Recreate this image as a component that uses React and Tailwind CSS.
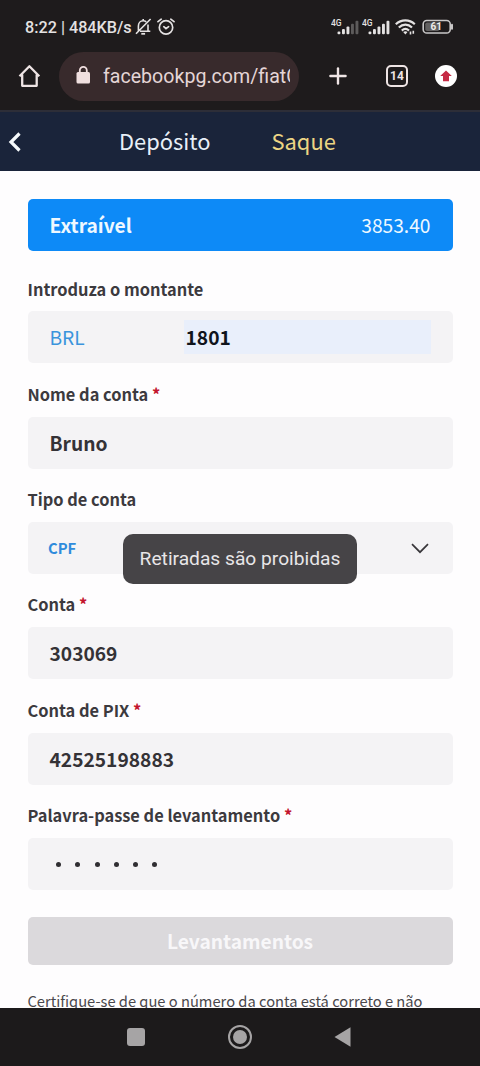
import { Plus } from 'lucide-react'

const FIELDS = [
  { label: 'Nome da conta', value: 'Bruno', required: true },
  { label: 'Tipo de conta', value: 'CPF', type: 'select' },
  { label: 'Conta', value: '303069', required: true },
  { label: 'Conta de PIX', value: '42525198883', required: true },
  { label: 'Palavra-passe de levantamento', length: 6, type: 'password', required: true },
]

function Signal({ weak }) {
  return (
    <svg className="w-[30.5px] h-[18px]" viewBox="0 0 30.5 18" fill="#e4e2e2">
      <text x="0" y="8.2" fontSize="8.5" fontWeight="500" className="font-['Roboto',sans-serif]">4G</text>
      <rect x="6.5" y="13.4" width="2.9" height="2.8" rx="1" />
      <rect x="11" y="11" width="2.9" height="5.2" rx="1" />
      <rect x="15.5" y="8.5" width="2.9" height="7.7" rx="1" />
      <rect x="20" y="5.7" width="2.9" height="10.5" rx="1" fill={weak ? '#5d5b5b' : '#e4e2e2'} />
      <rect x="24.5" y="2.7" width="2.9" height="13.5" rx="1" fill={weak ? '#5d5b5b' : '#e4e2e2'} />
    </svg>
  )
}

function StatusBar() {
  return (
    <div className="h-[53px] pt-px pl-[25px] pr-[26px] flex items-center text-[#e4e2e2]">
      <span className="w-[107px] pt-[2px] text-[16.2px] font-medium whitespace-nowrap">8:22 | 484KB/s</span>
      <svg className="ml-[3px] w-[17px] h-[18px]" viewBox="0 0 17 18" fill="none" stroke="currentColor" strokeWidth="1.6">
        <path d="M3.4 12.8V8c0-3 2-5.2 4.8-5.2 1.2 0 2.2.4 3 1M13 6.5v6.3M5 13.2h10.3M8.2 1v2M15.6 1 1 15.8" />
        <path d="M6.3 15.8h3.8" strokeWidth="1.8" />
      </svg>
      <svg className="ml-[5px] w-[18px] h-[18px]" viewBox="0 0 18 18" fill="none" stroke="currentColor" strokeWidth="1.7" strokeLinecap="round">
        <circle cx="9" cy="9.4" r="6.7" />
        <path d="M1 3.7 4.2 1.2M17 3.7l-3.2-2.5M6.8 8.7l2.2 2 2.6-2" />
      </svg>
      <div className="ml-auto flex items-center">
        <Signal weak />
        <Signal />
        <svg className="ml-[3px] w-[21px] h-[18px]" viewBox="0 0 21 18" fill="none" stroke="currentColor" strokeWidth="2.2">
          <path d="M.8 6.3c5.5-5.2 13.6-5.2 19 0M3.8 9.5c4-3.8 9.3-3.8 13.2 0M6.8 12.6c2.2-2 5-2 7.2 0" />
          <path d="m8.2 13.9 2.2 2.5 2.1-2.5c-1.2-1-3-1-4.3 0Z" fill="currentColor" stroke="none" />
          <path d="M15.5 13.5v3M18.3 12.8v3" strokeWidth="1.6" />
        </svg>
        <svg className="ml-[6px] w-[32px] h-[18px]" viewBox="0 0 32 18" fill="none">
          <rect x="1.2" y="2.5" width="27" height="12.5" rx="3.6" stroke="#c9c7c7" strokeWidth="1.6" />
          <rect x="3.3" y="4.5" width="14" height="8.5" rx="1.8" fill="#626060" />
          <path d="M30 6.7v4" stroke="#c9c7c7" strokeWidth="2" strokeLinecap="round" />
          <text x="14.2" y="12.4" textAnchor="middle" fontSize="10" fontWeight="700" fill="#eeecec" className="font-['Roboto',sans-serif]">61</text>
        </svg>
      </div>
    </div>
  )
}

function BrowserBar() {
  return (
    <div className="h-[57px] pb-[11px] pl-[18px] pr-[23px] flex items-center">
      <svg className="w-[23px] h-[24px] shrink-0" viewBox="0 0 23 24" fill="none" stroke="#eee4e4" strokeWidth="2.3" strokeLinejoin="round">
        <path d="M1.5 12.2 11.4 2.3l9.9 9.9M4.2 10.5v11.3h14.5V10.5" />
      </svg>
      <div className="ml-[18px] w-[240px] h-[49px] shrink-0 rounded-full bg-[#382a2c] pl-[17px] pr-[9px] flex items-center">
        <svg className="w-[15px] h-[18px] shrink-0 -mt-[2px]" viewBox="0 0 15 18" fill="#f0dfdf">
          <rect x=".5" y="6" width="13.5" height="11.5" rx="1.5" />
          <path d="M3.8 7V4.4a3.5 3.5 0 0 1 7 0V7" fill="none" stroke="#f0dfdf" strokeWidth="1.8" />
        </svg>
        <span className="ml-[12px] pt-[2px] w-[187px] overflow-hidden whitespace-nowrap text-[19.6px] leading-[30px] text-[#e4d5d6]">
          facebookpg.com/fiatO
        </span>
      </div>
      <Plus className="ml-[26px] w-[26px] h-[26px] shrink-0 text-[#f0e6e6]" strokeWidth={2.2} />
      <div className="ml-[35px] w-[22px] h-[22px] shrink-0 rounded-[5px] border-2 border-[#eee4e4] text-[#eee4e4] text-[12px] leading-none font-bold flex items-center justify-center">
        14
      </div>
      <div className="ml-[27px] w-[22px] h-[22px] shrink-0 rounded-full bg-white flex items-center justify-center">
        <svg className="w-[14px] h-[14px]" viewBox="0 0 14 14" fill="#c62a45">
          <path d="M7 1.5 12.8 7H10v5.2H4V7H1.2Z" />
        </svg>
      </div>
    </div>
  )
}

function Field({ label, value, type, required, length }) {
  return (
    <div className="h-[105.3px]">
      <div className="h-[53.5px] pt-[17.5px] text-[16.4px] leading-[26px] font-bold text-[#3c3a3e]">
        {label}
        {required && <span className="text-[#c3142d]"> *</span>}
      </div>
      <div className="h-[52px] rounded-[5px] bg-[#f4f3f5] px-[22px] flex items-center text-[19.2px] font-bold text-[#343236]">
        {type === 'select' && (
          <>
            <span className="-ml-[1.5px] text-[14.8px] text-[#2f8bdc]">{value}</span>
            <svg className="ml-auto mr-[1.5px] w-[18px] h-[11px]" viewBox="0 0 18 11" fill="none" stroke="#38363a" strokeWidth="1.7">
              <path d="m1 1.2 8 8 8-8" />
            </svg>
          </>
        )}
        {type === 'password' && (
          <div className="pl-[6.8px] pt-[2px] flex gap-[14.2px]">
            {Array.from({ length }, (_, i) => (
              <span key={i} className="w-[5px] h-[5px] rounded-full bg-[#302e32]" />
            ))}
          </div>
        )}
        {!type && <span className="pt-px">{value}</span>}
      </div>
    </div>
  )
}

function App() {
  return (
    <div className="relative w-[480px] h-[1066px] overflow-hidden flex flex-col bg-[#fefdfe] font-['Noto_Sans_CJK_SC',sans-serif]">
      <div className="h-[110px] shrink-0 bg-[#1e1b1c] font-['Roboto',sans-serif]">
        <StatusBar />
        <BrowserBar />
      </div>

      <header className="h-[61px] shrink-0 bg-[#1a243a] border-t-2 border-[#2d2e38] flex items-center text-[21.9px] text-[#e9f0f8]">
        <svg className="ml-[8px] w-[13px] h-[20px] shrink-0" viewBox="0 0 13 20" fill="none" stroke="#f6fafc" strokeWidth="3.2">
          <path d="M11.5 1.5 3 10l8.5 8.5" />
        </svg>
        <span className="ml-[98px] w-[152.5px]">Depósito</span>
        <span className="text-[#ecd584]">Saque</span>
      </header>

      <main className="flex-1 min-h-0 overflow-hidden px-[27.5px] pt-[28px]">
        <div className="h-[52px] rounded-[5px] bg-[#0d8af7] px-[22px] flex items-center justify-between text-[19.2px] text-[#eef8ff]">
          <span className="font-bold">Extraível</span>
          <span>3853.40</span>
        </div>

        <div className="h-[112.3px] pt-[7.5px]">
          <div className="h-[52.5px] pt-[17px] text-[16.4px] leading-[26px] font-bold text-[#3c3a3e]">
            Introduza o montante
          </div>
          <div className="h-[52px] rounded-[5px] bg-[#f4f3f5] px-[22px] flex items-center text-[19.2px]">
            <span className="w-[134px] text-[#3a94dc]">BRL</span>
            <span className="flex-1 h-[34px] leading-[34px] bg-[#e9effb] font-bold text-[#10141c] pl-[2px]">1801</span>
          </div>
        </div>

        {FIELDS.map((field) => (
          <Field key={field.label} {...field} />
        ))}

        <button className="mt-[27px] pt-[2px] w-full h-[48px] rounded-[5px] bg-[#dbd9dc] text-[19.2px] font-bold text-[#f8f7f9]">
          Levantamentos
        </button>
        <p className="mt-[23px] text-[14.7px] leading-[26px] whitespace-nowrap text-[#4a484c]">
          Certifique-se de que o número da conta está correto e não
        </p>
      </main>

      <nav className="h-[58px] shrink-0 bg-[#1c1a1b] pl-[127px] flex items-center">
        <span className="w-[18px] h-[18px] rounded-[3px] bg-[#a6a4a5]" />
        <span className="ml-[83px] w-[24px] h-[24px] rounded-full border-2 border-[#a6a4a5] flex items-center justify-center">
          <span className="w-[14px] h-[14px] rounded-full bg-[#a6a4a5]" />
        </span>
        <svg className="ml-[82px] w-[17px] h-[20px]" viewBox="0 0 17 20" fill="#a6a4a5">
          <path d="M.5 10 16.5.3v19.4Z" />
        </svg>
      </nav>

      {/* Toast */}
      <div className="absolute left-[123px] top-[534px] w-[234px] h-[50px] rounded-[10px] bg-[#464447] flex items-center justify-center text-[19.2px] text-[#e8e6e8] font-['Roboto',sans-serif] whitespace-nowrap">
        Retiradas são proibidas
      </div>
    </div>
  )
}

export default App
